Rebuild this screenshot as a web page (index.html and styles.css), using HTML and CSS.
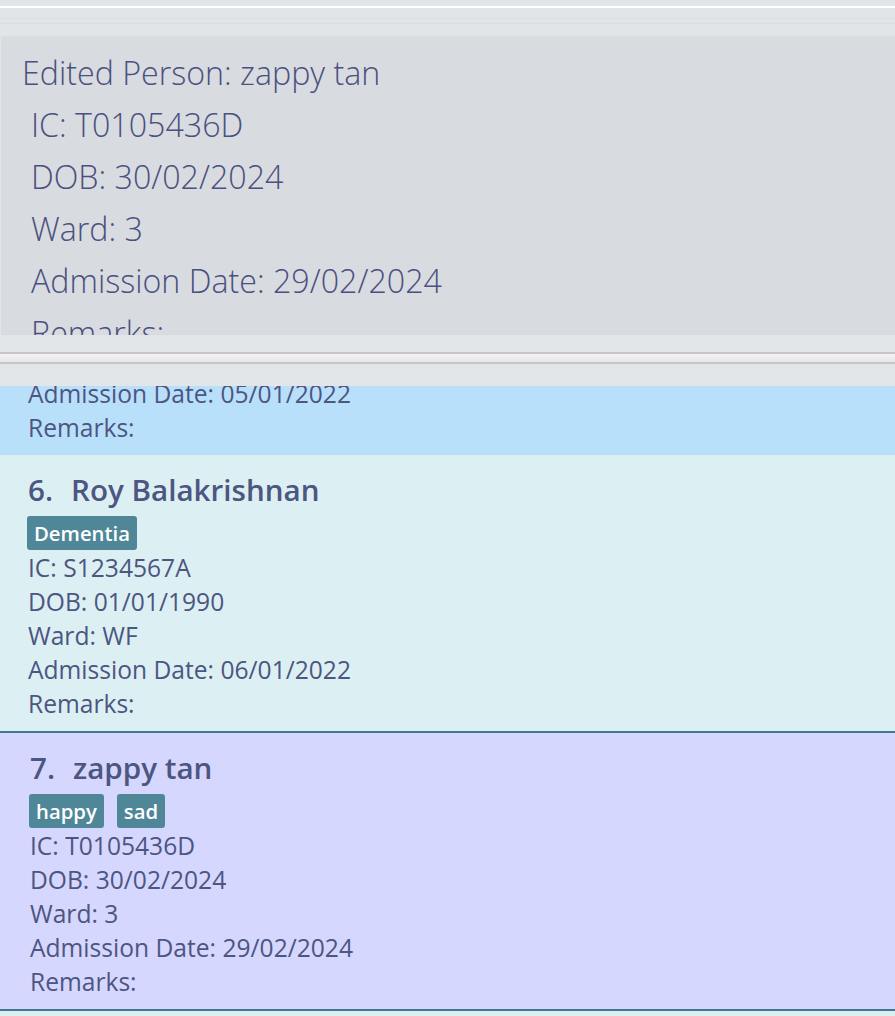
FILE: index.html
```html
<!DOCTYPE html>
<html>
<head>
<meta charset="utf-8">
<link rel="stylesheet" href="styles.css">
</head>
<body>
<div class="app">
  <div class="chrome">
    <div class="strip"></div>
    <div class="white-line"></div>
    <div class="band band-a"></div>
    <div class="band band-b"></div>
    <div class="band band-c"></div>
  </div>
  <div class="result">
    <div class="result-text">
      <div class="r-line">Edited Person: zappy tan</div>
      <div class="r-line indent">IC: T0105436D</div>
      <div class="r-line indent">DOB: 30/02/2024</div>
      <div class="r-line indent">Ward: 3</div>
      <div class="r-line indent">Admission Date: 29/02/2024</div>
      <div class="r-line indent">Remarks:</div>
    </div>
  </div>
  <div class="gap-top"></div>
  <div class="splitter"></div>
  <div class="gap-bottom"></div>
  <div class="list">
    <div class="list-inner">
      <div class="card card-blue card-partial">
        <div class="field">Admission Date: 05/01/2022</div>
        <div class="field">Remarks:</div>
      </div>
      <div class="card card-cyan bordered">
        <div class="name"><span class="num">6.</span>Roy Balakrishnan</div>
        <div class="tags"><span class="tag">Dementia</span></div>
        <div class="field">IC: S1234567A</div>
        <div class="field">DOB: 01/01/1990</div>
        <div class="field">Ward: WF</div>
        <div class="field">Admission Date: 06/01/2022</div>
        <div class="field">Remarks:</div>
      </div>
      <div class="card card-lav bordered shifted">
        <div class="name"><span class="num">7.</span>zappy tan</div>
        <div class="tags"><span class="tag">happy</span><span class="tag">sad</span></div>
        <div class="field">IC: T0105436D</div>
        <div class="field">DOB: 30/02/2024</div>
        <div class="field">Ward: 3</div>
        <div class="field">Admission Date: 29/02/2024</div>
        <div class="field">Remarks:</div>
      </div>
      <div class="card card-cyan"></div>
    </div>
  </div>
</div>
</body>
</html>
```

FILE: styles.css
```css
html, body {
  margin: 0;
  padding: 0;
  background: #e2e6e9;
}
.app {
  width: 895px;
  height: 1016px;
  overflow: hidden;
  display: flex;
  flex-direction: column;
  font-family: "Open Sans", "Noto Sans", sans-serif;
  color: #4d5581;
}
.chrome { flex: none; }
.strip { height: 6px; background: #e1e5e8; }
.white-line { height: 2px; background: #ffffff; }
.band { background: #e1e5e8; }
.band-a { height: 10px; border-bottom: 1px solid #dadee1; }
.band-b { height: 4px; border-bottom: 1px solid #dadee1; }
.band-c { height: 12px; border-bottom: 1px solid #dcdfe2; }
.result {
  flex: none;
  height: 298px;
  margin-left: 1px;
  background: #d8dbdf;
  overflow: hidden;
}
.result-text {
  padding: 10px 0 0 21px;
  font-weight: 300;
  font-size: 32.2px;
  line-height: 52px;
  color: #4a5080;
  white-space: nowrap;
}
.r-line.indent { padding-left: 9px; }
.gap-top { flex: none; height: 17px; background: #e2e6e9; }
.splitter {
  flex: none;
  height: 8px;
  border-top: 2px solid #c6c6c8;
  border-bottom: 2px solid #c6c6c8;
  background: linear-gradient(#f4f4f4, #e6e6e6);
}
.gap-bottom { flex: none; height: 22px; background: #e2e6e9; }
.list {
  flex: 1;
  overflow: hidden;
}
.list-inner { margin-top: -9px; }
.card {
  padding: 0 0 10px 28px;
}
.card.shifted { padding-left: 30px; }
.card-blue { background: #b9e0fb; }
.card-cyan { background: #dcf0f3; min-height: 40px; }
.card-lav { background: #d5d7fe; }
.bordered { border-bottom: 2px solid #3f7b8d; }
.name {
  font-size: 29.6px;
  font-weight: 600;
  line-height: 38px;
  padding-top: 16px;
  color: #4d5581;
  white-space: nowrap;
}
.num { margin-right: 18px; }
.tags {
  display: flex;
  gap: 13px;
  margin-left: -1px;
  padding-top: 7px;
  padding-bottom: 1px;
}
.tag {
  background: #4f8799;
  color: #ffffff;
  font-size: 20.3px;
  font-weight: 600;
  line-height: 34px;
  padding: 0 7px;
  border-radius: 3px;
}
.field {
  font-size: 24.6px;
  line-height: 34px;
  white-space: nowrap;
}
```
